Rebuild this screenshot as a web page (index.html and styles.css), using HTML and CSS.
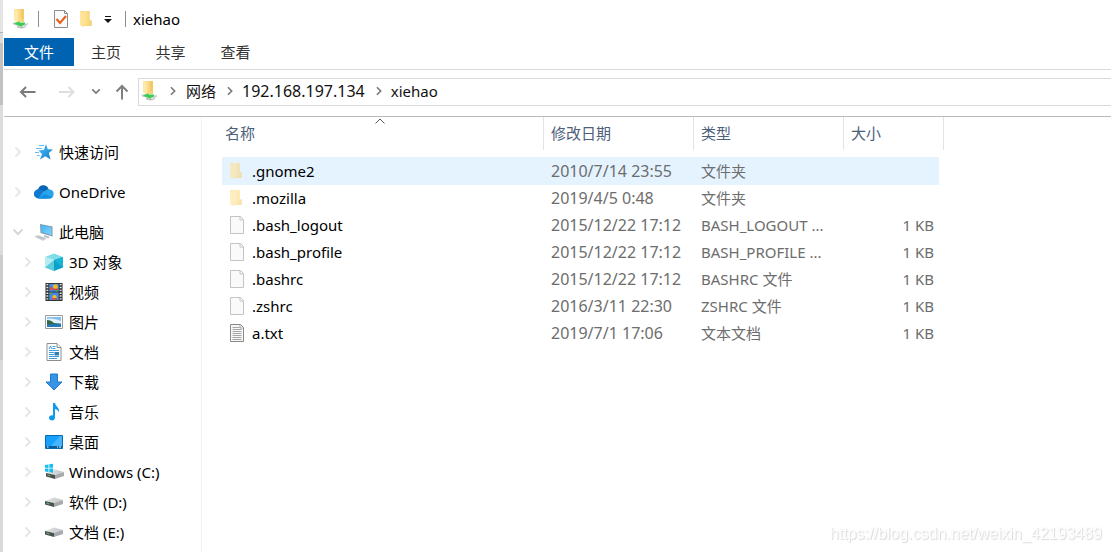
FILE: index.html
```html
<!DOCTYPE html>
<html lang="zh-CN">
<head>
<meta charset="utf-8">
<title>xiehao</title>
<link rel="stylesheet" href="styles.css">
</head>
<body>
<svg class="defs" aria-hidden="true">
  <defs>
    <linearGradient id="g-fold" x1="0" x2="1"><stop offset="0" stop-color="#ffe7a0"/><stop offset="1" stop-color="#f6cf6b"/></linearGradient>
    <linearGradient id="g-star" x1="0" y1="0" x2="1" y2="1"><stop offset="0" stop-color="#55c4f5"/><stop offset="1" stop-color="#0b78cf"/></linearGradient>
    <linearGradient id="g-screen" x1="0" y1="0" x2="1" y2="1"><stop offset="0" stop-color="#3fb4f4"/><stop offset="1" stop-color="#85d2fa"/></linearGradient>
    <linearGradient id="g-drive" x1="0" y1="0" x2="1" y2="0"><stop offset="0" stop-color="#e2e4e5"/><stop offset="1" stop-color="#c3c6c8"/></linearGradient>
  </defs>
  <symbol id="chev" viewBox="0 0 8 12"><path d="M1.5 1.5 6 6 1.5 10.5" fill="none" stroke="currentColor" stroke-width="2"/></symbol>
  <symbol id="chev-down" viewBox="0 0 12 8"><path d="M1.5 1.5 6 6 10.5 1.5" fill="none" stroke="currentColor" stroke-width="2"/></symbol>
  <symbol id="netfolder" viewBox="0 0 16 20">
    <path d="M2 0h10v13H6l-4-2z" fill="url(#g-fold)"/><path d="M9 0h3v9l-3 1z" fill="#f3ca67"/><path d="M2 0l4 2v12l-4-3z" fill="#ffe9a8"/>
    <path d="M0 14l4-1 8 2 4-1v2l-5 1.500-9-1.500z" fill="#c9d3cc"/>
    <path d="M2 14.500l5-2 1 1 5 0v2l-3 1v1.500l-5-2z" fill="#3ecb55"/><path d="M5 17l6 1 3-1v1l-4 1.500-5-1z" fill="#b3bab5"/>
  </symbol>
  <symbol id="folder" viewBox="0 0 14 18"><path d="M1 1h9.500v9.500H12.500V16H3.500z" fill="#f7d173"/><path d="M1 1l3.500 1.500V17.500L1 15z" fill="#ffe49a"/><path d="M4.500 2.500V1h6v9.500h2V15.500h-8z" fill="url(#g-fold)"/></symbol>
  <symbol id="check" viewBox="0 0 16 20"><path d="M1.500 1.500h10l3 3v14h-13z" fill="#fafafa" stroke="#8d8d8d"/><path d="M11.500 1.500v3h3" fill="none" stroke="#8d8d8d"/><path d="M3.500 10l3.500 4 6-7" fill="none" stroke="#ea5b17" stroke-width="2"/></symbol>
  <symbol id="file" viewBox="0 0 16 20"><path d="M1.500 1.500h10l3 3v14h-13z" fill="#fafafa" stroke="#c4c4c4"/><path d="M11 1.500v3.500h3.500" fill="none" stroke="#c4c4c4"/></symbol>
  <symbol id="txt" viewBox="0 0 16 20"><path d="M1.500 1.500h10l3 3v14h-13z" fill="#f7f7f7" stroke="#888"/><path d="M11 1.500v3.500h3.500M3.500 4.500h7M3.500 6.500h9M3.500 8.500h9M3.500 10.500h9M3.500 12.500h9M3.500 14.500h9M3.500 16.500h9" fill="none" stroke="#a5a5a5"/></symbol>
  <symbol id="star" viewBox="0 0 18 18"><path d="M11 1l1.700 5.200 5.300.3-4.200 3.500 1.700 6.500-5-3.300-5.500 3.300L7 11 3.500 7.500l5.500-.8z" fill="url(#g-star)"/><path d="M4 2.500h5M1 5.500h6M0 9.500h4M2 12.500h2.500" stroke="#62bdf1" stroke-width="1"/></symbol>
  <symbol id="cloud" viewBox="0 0 20 14"><path d="M4 4.500A5.500 5.500 0 0 1 14.500 4l1 4-9 3z" fill="#0864b4"/><path d="M4.500 13.500A4.700 4.700 0 1 1 7 4.800L16 10l-3 3.500z" fill="#1179d1"/><path d="M9 7l5-3a5 5 0 0 1 2 .5A4.600 4.600 0 0 1 16 13.500H4.500z" fill="#28a5ea"/><path d="M4.500 13.500l6.500-4.500 7.500 3.500-2.500 1z" fill="#1490df"/></symbol>
  <symbol id="pc" viewBox="0 0 20 18"><path d="M6 1l12.500 2.500v10L6.500 10z" fill="#7d98ab"/><path d="M7 2l10.500 2.200v8L7.500 9z" fill="url(#g-screen)"/><path d="M10 12l5 1.500v2l-5-1.500z" fill="#b9c0c5"/><path d="M0 13.500l4-1.500 9 3.500-4 2.500z" fill="#d4d8db"/><path d="M2 13.700l8 2.800M4 13l7 2.600" stroke="#a9afb3" stroke-width=".6"/></symbol>
  <symbol id="cube" viewBox="0 0 18 18"><path d="M0 4l9-3.500L18 4l-9 3z" fill="#7fdde6"/><path d="M0 4l9 3v11l-9-3.500z" fill="#b5edf1"/><path d="M18 4L9 7v11l9-3.500z" fill="#0ba2ca"/><path d="M9 7v11l-9-3.500z" fill="#5accda"/><path d="M18 4v10.500L9 7z" fill="#18b4d5"/></symbol>
  <symbol id="video" viewBox="0 0 18 19"><path d="M0 0h18v19H0z" fill="#333"/><path d="M4 1h10v8H4zM4 10h10v8H4z" fill="#438ae4"/><path d="M2 1v17M16 1v17" stroke="#e7e7e7" stroke-width="2" stroke-dasharray="1.500 1.500"/><circle cx="10.500" cy="4" r="2.600" fill="#f4bc22"/><circle cx="6" cy="6" r="1.500" fill="#e94834"/><path d="M8 6h5v1.500H8z" fill="#d63a2a"/><circle cx="9.500" cy="15" r="2.300" fill="#f4bc22"/><path d="M7 16h5v1.500H7z" fill="#d63a2a"/><path d="M11 7.500h2V9h-2zM5 10h2v2H5z" fill="#4ea842"/></symbol>
  <symbol id="picture" viewBox="0 0 18 14"><path d="M.5.5h17v13H.5z" fill="#fff" stroke="#9b9b9b"/><path d="M2 2h14v10H2z" fill="#82bfeb"/><path d="M2 4c4-1 9 0 14 2v2H2z" fill="#e1f2fb"/><path d="M2 5c3 0 5 1 7 3l7 1v1H2z" fill="#35684b"/><path d="M2 9.500l14-.5v3H2z" fill="#2478bb"/></symbol>
  <symbol id="doc" viewBox="0 0 15 18"><path d="M.5.5h10l4 4v13H.5z" fill="#fff" stroke="#8d8d8d"/><path d="M10.500.5v4h4" fill="#eee" stroke="#8d8d8d"/><path d="M2.500 6L4 3l1.500 3M6 3.500h3M6 5.500h3M2.500 7.500h10M2.500 9.500h5M2.500 11.500h5M2.500 13.500h10M2.500 15.500h8" fill="none" stroke="#3d9bd8"/><path d="M8 9h4.500v3.500H8z" fill="#2c7eba"/></symbol>
  <symbol id="download" viewBox="0 0 18 18"><path d="M5.500 1h7v8H17l-8 8-8-8h4.500z" fill="#3794e4" stroke="#1f7bd0"/></symbol>
  <symbol id="music" viewBox="0 0 18 18"><path d="M8 0h2c.5 3.500 5 4.500 4 9.500-.5-2-2-3-4-3.500v8.500c0 4-6 3.500-6 .5 0-2 2-3 4-2.500z" fill="#109bea"/></symbol>
  <symbol id="desktop" viewBox="0 0 18 14"><path d="M.5.5h17v13H.5z" fill="#17a1fb" stroke="#086bb2"/><path d="M17 1v10L6 11 15 1z" fill="#43b6ff"/><path d="M1 12h16" stroke="#0b5e9c" stroke-width="2"/><path d="M2 12h1.500M12 12h1M14 12h2" stroke="#fff"/></symbol>
  <symbol id="drive" viewBox="0 0 18 12"><path d="M0 5l9-3.500L18 4l-9 3z" fill="url(#g-drive)"/><path d="M0 5l9 2v4L0 8.500z" fill="#4c514f"/><path d="M9 7l9-3v4l-9 3z" fill="#a6aaac"/><path d="M1.500 7l3 1" stroke="#53ca69"/></symbol>
  <symbol id="windrive" viewBox="0 0 20 18"><path d="M2 10l9-3.500L20 9l-9 3z" fill="url(#g-drive)"/><path d="M2 10l9 2v4l-9-2.500z" fill="#4c514f"/><path d="M11 12l9-3v4l-9 3z" fill="#a6aaac"/><path d="M3.500 12l3 1" stroke="#53ca69"/><path d="M1 2l3.500-.5v3.300H1zM5.300 1.300L9 .7v4.100H5.300zM1 5.600h3.500v3.300L1 8.500zM5.300 5.600H9v4.100l-3.700-.6z" fill="#16bdf2"/></symbol>
</svg>

<div class="window">
  <header class="titlebar">
    <svg class="i16x20"><use href="#netfolder"/></svg>
    <span class="sep sep-first"></span>
    <button class="plain" aria-label="属性"><svg class="i16x20"><use href="#check"/></svg></button>
    <button class="plain quick-folder" aria-label="新建文件夹"><svg class="i14x18"><use href="#folder"/></svg></button>
    <button class="plain quick-menu" aria-label="自定义快速访问工具栏"><svg width="8" height="8" viewBox="0 0 8 8"><path d="M1 1.500h6" stroke="#111"/><path d="M0 4h8L4 8z" fill="#111"/></svg></button>
    <span class="sep"></span>
    <span class="title">xiehao</span>
  </header>

  <nav class="tabs" aria-label="功能区">
    <button class="tab tab-file">文件</button>
    <button class="tab">主页</button>
    <button class="tab">共享</button>
    <button class="tab">查看</button>
  </nav>

  <div class="navrow">
    <button class="plain" aria-label="后退"><svg width="18" height="14" viewBox="0 0 18 14"><path d="M16.500 7H2M7 2L2 7l5 5" fill="none" stroke="#7a7a7a" stroke-width="2"/></svg></button>
    <button class="plain forward" aria-label="前进" disabled><svg width="18" height="14" viewBox="0 0 18 14"><path d="M1 7h14.500M10.500 2l5 5-5 5" fill="none" stroke="#dedede" stroke-width="2"/></svg></button>
    <button class="plain recent" aria-label="最近位置"><svg width="10" height="7"><use href="#chev-down"/></svg></button>
    <button class="plain up" aria-label="向上"><svg width="14" height="16" viewBox="0 0 14 16"><path d="M7 15.500V2M1.500 7.500L7 2l5.500 5.500" fill="none" stroke="#808080" stroke-width="2"/></svg></button>
    <div class="address">
      <svg class="i16x20"><use href="#netfolder"/></svg>
      <svg class="crumb-chev crumb-chev-first"><use href="#chev"/></svg>
      <a class="crumb" href="#">网络</a>
      <svg class="crumb-chev"><use href="#chev"/></svg>
      <a class="crumb crumb-ip" href="#">192.168.197.134</a>
      <svg class="crumb-chev"><use href="#chev"/></svg>
      <a class="crumb" href="#">xiehao</a>
    </div>
  </div>

  <div class="body">
    <aside class="sidebar">
      <ul class="tree">
        <li class="root"><svg class="tw"><use href="#chev"/></svg><svg class="ic"><use href="#star"/></svg><a href="#">快速访问</a></li>
        <li class="root"><svg class="tw"><use href="#chev"/></svg><svg class="ic"><use href="#cloud"/></svg><a href="#">OneDrive</a></li>
        <li class="root"><svg class="tw tw-open"><use href="#chev-down"/></svg><svg class="ic"><use href="#pc"/></svg><a href="#">此电脑</a></li>
        <li><svg class="tw"><use href="#chev"/></svg><svg class="ic"><use href="#cube"/></svg><a href="#">3D 对象</a></li>
        <li><svg class="tw"><use href="#chev"/></svg><svg class="ic"><use href="#video"/></svg><a href="#">视频</a></li>
        <li><svg class="tw"><use href="#chev"/></svg><svg class="ic ic-flat"><use href="#picture"/></svg><a href="#">图片</a></li>
        <li><svg class="tw"><use href="#chev"/></svg><svg class="ic"><use href="#doc"/></svg><a href="#">文档</a></li>
        <li><svg class="tw"><use href="#chev"/></svg><svg class="ic"><use href="#download"/></svg><a href="#">下载</a></li>
        <li><svg class="tw"><use href="#chev"/></svg><svg class="ic"><use href="#music"/></svg><a href="#">音乐</a></li>
        <li><svg class="tw"><use href="#chev"/></svg><svg class="ic ic-flat"><use href="#desktop"/></svg><a href="#">桌面</a></li>
        <li><svg class="tw"><use href="#chev"/></svg><svg class="ic"><use href="#windrive"/></svg><a href="#">Windows (C:)</a></li>
        <li><svg class="tw"><use href="#chev"/></svg><svg class="ic ic-drive"><use href="#drive"/></svg><a href="#">软件 (D:)</a></li>
        <li><svg class="tw"><use href="#chev"/></svg><svg class="ic ic-drive"><use href="#drive"/></svg><a href="#">文档 (E:)</a></li>
      </ul>
    </aside>

    <main class="files">
      <table class="list">
        <colgroup><col class="c-name"><col class="c-date"><col class="c-type"><col class="c-size"><col class="c-end"></colgroup>
        <thead>
          <tr>
            <th class="h-name">名称<svg class="sort" viewBox="0 0 10 6"><path d="M.5 5.500L5 1l4.500 4.500" fill="none" stroke="#555"/></svg></th>
            <th>修改日期</th><th>类型</th><th colspan="2">大小</th>
          </tr>
        </thead>
        <tbody>
          <tr class="hover"><td class="name"><div><svg class="i14x18 dim"><use href="#folder"/></svg><span>.gnome2</span></div></td><td class="date">2010/7/14 23:55</td><td>文件夹</td><td class="size"></td></tr>
          <tr><td class="name"><div><svg class="i14x18 dim"><use href="#folder"/></svg><span>.mozilla</span></div></td><td class="date">2019/4/5 0:48</td><td>文件夹</td><td class="size"></td></tr>
          <tr><td class="name"><div><svg class="i16x20"><use href="#file"/></svg><span>.bash_logout</span></div></td><td class="date">2015/12/22 17:12</td><td>BASH_LOGOUT ...</td><td class="size">1 KB</td></tr>
          <tr><td class="name"><div><svg class="i16x20"><use href="#file"/></svg><span>.bash_profile</span></div></td><td class="date">2015/12/22 17:12</td><td>BASH_PROFILE ...</td><td class="size">1 KB</td></tr>
          <tr><td class="name"><div><svg class="i16x20"><use href="#file"/></svg><span>.bashrc</span></div></td><td class="date">2015/12/22 17:12</td><td>BASHRC 文件</td><td class="size">1 KB</td></tr>
          <tr><td class="name"><div><svg class="i16x20"><use href="#file"/></svg><span>.zshrc</span></div></td><td class="date">2016/3/11 22:30</td><td>ZSHRC 文件</td><td class="size">1 KB</td></tr>
          <tr><td class="name"><div><svg class="i16x20"><use href="#txt"/></svg><span>a.txt</span></div></td><td class="date">2019/7/1 17:06</td><td>文本文档</td><td class="size">1 KB</td></tr>
        </tbody>
      </table>
    </main>
  </div>
</div>
<div class="watermark">https://blog.csdn.net/weixin_42193489</div>
</body>
</html>
```

FILE: styles.css
```css
* { box-sizing: border-box; }

body {
  margin: 0;
  min-height: 100vh;
  display: flex;
  overflow: hidden;
  padding-left: 3px;
  background: linear-gradient(#e4e4e4 0 32px, #b0b0b0 32px 33px, #dcdcdc 33px 43px, #c2c2c2 43px 105px, #dcdcdc 105px 255px, #cccccc 255px 360px, #dadada 360px);
  font-family: "Noto Sans", "Noto Sans CJK SC", sans-serif;
  font-size: 15px;
  line-height: 20px;
  color: #000;
}

.defs { position: absolute; width: 0; height: 0; }
svg { display: block; flex: none; }
a { color: inherit; text-decoration: none; }
button { font: inherit; color: inherit; }

.plain { display: flex; padding: 0; border: 0; background: none; }
.i16x20 { width: 16px; height: 20px; }
.i14x18 { width: 14px; height: 18px; }
.dim { opacity: .6; }

.window {
  flex: 1;
  min-width: 0;
  display: flex;
  flex-direction: column;
  background: #fff;
}

.titlebar {
  display: flex;
  align-items: center;
  height: 38px;
  padding-left: 9px;
}
.sep { width: 1px; height: 16px; background: #8c8c8c; }
.sep-first { margin: 0 14px 0 10px; }
.quick-folder { margin-left: 10px; }
.quick-menu { margin: 0 13px 0 11px; }
.title { margin-left: 7px; }

.tabs {
  display: flex;
  margin-left: 1px;
  padding-bottom: 3px;
  border-bottom: 1px solid #dadada;
}
.tab {
  width: 65px;
  height: 28px;
  padding: 0;
  border: 0;
  background: none;
  color: #333;
}
.tab-file { width: 70px; background: #0063b1; color: #fff; }

.tab-file + .tab { width: 64px; }

.navrow {
  display: flex;
  align-items: center;
  height: 46px;
  margin-left: 1px;
  padding: 0 0 3px 15px;
}
.forward { margin-left: 21px; }
.recent { margin-left: 15px; color: #7a7a7a; }
.up { margin: 0 9px 0 14px; }

.address {
  flex: 1;
  display: flex;
  align-items: center;
  height: 28px;
  padding: 0 0 2px 2px;
  border: 1px solid #d9d9d9;
  border-right: 0;
}
.crumb-chev { width: 8px; height: 10px; margin: 0 8px 0 10px; color: #7a7a7a; }
.crumb-chev-first { margin: 0 9px 0 12px; }
.crumb { color: #111; white-space: nowrap; }
.crumb-ip { font-size: 16px; }

.body {
  flex: 1;
  display: flex;
  margin-left: 1px;
  border-top: 1px solid #bababa;
}

.sidebar {
  flex: none;
  width: 198px;
  padding-top: 15px;
  border-right: 1px solid #f1f1f1;
}
.tree { margin: 0; padding: 0; list-style: none; }
.tree li {
  display: flex;
  align-items: center;
  height: 30px;
  padding-left: 20px;
  white-space: nowrap;
}
.tree .root { height: 40px; padding-left: 10px; }
.tree .root:nth-child(3) { padding-top: 5px; height: 35px; }
.tw { width: 8px; height: 12px; margin-right: 12px; color: #e6e6e6; }
.tw-open { width: 12px; height: 8px; margin: 0 10px 0 -2px; color: #d6d6d6; }
.ic { width: 20px; height: 18px; margin-right: 5px; }
.ic-drive { height: 12px; }
.ic-flat { height: 14px; }

.files { flex: 1; min-width: 0; padding-left: 20px; }

.list { width: 722px; table-layout: fixed; border-collapse: separate; border-spacing: 0; }
.c-name { width: 322px; }
.c-date, .c-type { width: 150px; }
.c-size { width: 95px; }
.c-end { width: 5px; }

.list th {
  height: 33px;
  padding: 0 0 1px 7px;
  border-right: 1px solid #e3e3e3;
  color: #4c607a;
  font-weight: 400;
  text-align: left;
}
.list .h-name { position: relative; padding-left: 3px; }
.sort { position: absolute; top: 1px; left: 50%; width: 10px; height: 6px; margin-left: -8px; }

.list thead::after { content: ""; display: block; height: 7px; }

.list td {
  height: 27px;
  padding: 0 0 0 7px;
  color: #6d6d6d;
  white-space: nowrap;
}
.list .hover td { background: #e5f3ff; box-shadow: 0 1px 0 #e5f3ff; }
.list .name { color: #000; }
.list .name div { display: flex; align-items: center; gap: 7px; }
.list .name .i14x18 { margin-right: 2px; }
.list .date { font-size: 16px; }
.list .size { padding: 0 5px 0 0; text-align: right; }

.watermark {
  position: fixed;
  right: 9px;
  bottom: 8px;
  font: 16px/20px "Liberation Sans", Arial, sans-serif;
  color: #fff;
  text-shadow: 1px 1px 1px #d8d8d8, 0 0 1px #e6e6e6;
}
```
